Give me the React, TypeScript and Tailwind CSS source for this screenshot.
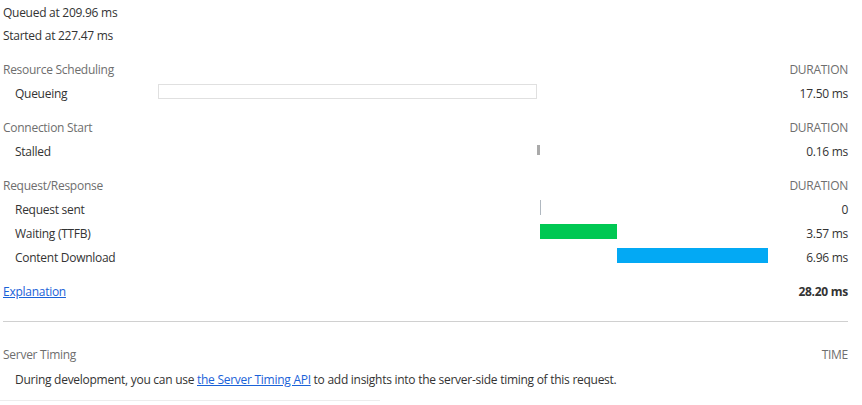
import React from 'react';

type Row = { label: string; left: number; width: number; color?: string; kind?: 'box' | 'tick' | 'line' | 'bar'; duration: string };

const sections: { title: string; rows: Row[] }[] = [
  {
    title: 'Resource Scheduling',
    rows: [{ label: 'Queueing', left: 0, width: 379, kind: 'box', duration: '17.50 ms' }],
  },
  {
    title: 'Connection Start',
    rows: [{ label: 'Stalled', left: 379, width: 3, kind: 'tick', duration: '0.16 ms' }],
  },
  {
    title: 'Request/Response',
    rows: [
      { label: 'Request sent', left: 382, width: 1, kind: 'line', duration: '0' },
      { label: 'Waiting (TTFB)', left: 382, width: 77, kind: 'bar', color: '#00c853', duration: '3.57 ms' },
      { label: 'Content Download', left: 459, width: 151, kind: 'bar', color: '#03a9f4', duration: '6.96 ms' },
    ],
  },
];

const Bar = ({ row }: { row: Row }) => {
  const style = { marginLeft: row.left, width: row.width };
  if (row.kind === 'box') return <div style={style} className="h-[15px] border border-[#e0e0e0] bg-white" />;
  if (row.kind === 'tick') return <div style={style} className="h-[10px] bg-[#aaaaaa]" />;
  if (row.kind === 'line') return <div style={style} className="h-[15px] bg-[#b0b8c0]" />;
  return <div style={{ ...style, backgroundColor: row.color }} className="h-[15px]" />;
};

export default function App() {
  return (
    <div className="w-[862px] h-[405px] overflow-hidden bg-white pt-[1px] text-[12px] tracking-[-0.27px] text-[#333333]" style={{ fontFamily: '"Open Sans", "Noto Sans", sans-serif' }}>
      <div className="pl-[3px] w-[848px]">
        <div className="h-[23px] flex items-center">Queued at 209.96 ms</div>
        <div className="h-[23px] flex items-center">Started at 227.47 ms</div>

        <div className="mt-[11px] flex flex-col gap-[10px]">
          {sections.map((s) => (
            <div key={s.title}>
              <div className="h-[24px] flex items-center justify-between text-[#6e6e6e]">
                <span>{s.title}</span>
                <span>DURATION</span>
              </div>
              {s.rows.map((r) => (
                <div key={r.label} className="h-[24px] flex items-center">
                  <div className="w-[155px] pl-3 shrink-0">{r.label}</div>
                  <div className="w-[610px] shrink-0 flex items-center -mt-[5px]">
                    <Bar row={r} />
                  </div>
                  <div className="flex-1 text-right">{r.duration}</div>
                </div>
              ))}
            </div>
          ))}
          <div className="h-[24px] flex items-center justify-between">
            <a href="#" className="text-[#1a62d8] underline">Explanation</a>
            <span className="font-bold">28.20 ms</span>
          </div>
        </div>

        <div className="mt-[17px] border-t border-[#d0d0d0]" />

        <div className="mt-[21px] h-[24px] flex items-center justify-between text-[#6e6e6e]">
          <span>Server Timing</span>
          <span>TIME</span>
        </div>
        <div className="h-[25px] flex items-center pl-3">
          <span>
            During development, you can use{' '}
            <a href="#" className="text-[#1a62d8] underline">the Server Timing API</a>{' '}
            to add insights into the server-side timing of this request.
          </span>
        </div>
      </div>
      <div className="mt-[8px] w-[380px] border-t border-[#ececec]" />
    </div>
  );
}
